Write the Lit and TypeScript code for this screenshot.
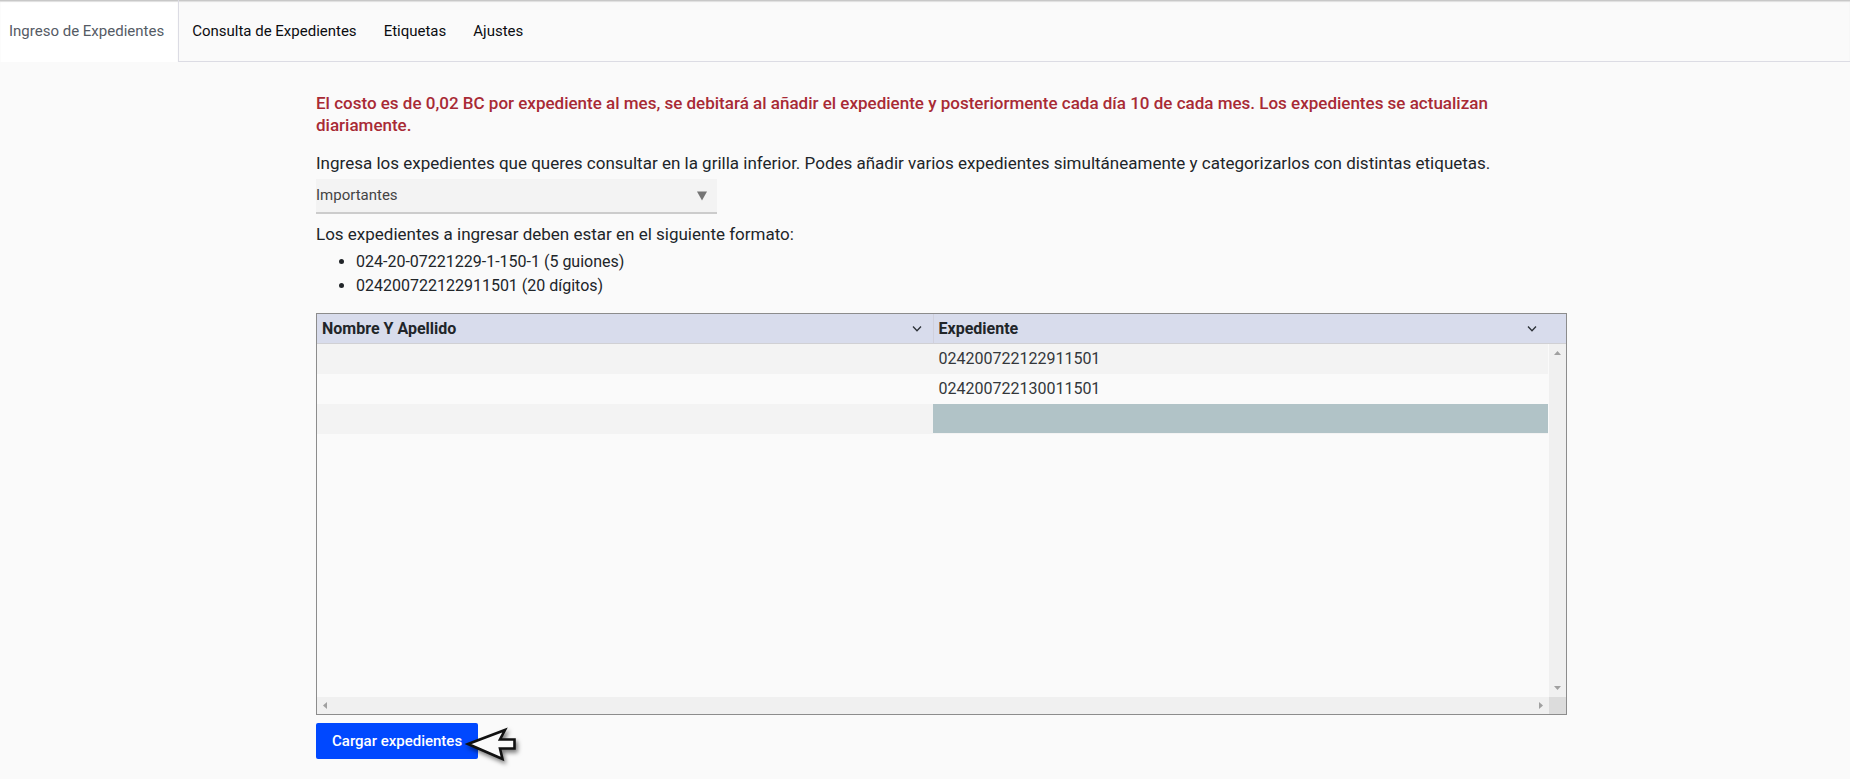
import { LitElement, html, css } from "lit";
import { customElement, state } from "lit/decorators.js";

interface Expediente {
  nombre: string;
  numero: string;
}

@customElement("app-nav")
export class AppNav extends LitElement {
  static styles = css`
    :host {
      display: block;
    }
    .bar {
      display: flex;
      height: 62px;
      box-sizing: border-box;
      font-size: 15px;
      line-height: 20px;
      box-shadow: inset 0 1px 0 #c8c8c8, inset 0 2px 1px #dedede;
    }
    .tab {
      display: flex;
      align-items: center;
      padding: 0 14px 0 13px;
      color: #0b0c10;
      text-decoration: none;
    }
    .tab.active {
      padding: 0 14px 0 9px;
      background: #fff;
      color: #555b65;
      border-right: 1px solid #dcdce4;
      box-shadow: inset 0 1px 0 #c8c8c8, inset 0 2px 1px #dedede;
    }
    .rest {
      display: flex;
      flex: 1;
      border-bottom: 1px solid #dcdce4;
    }
  `;

  render() {
    return html`
      <nav class="bar">
        <a class="tab active" href="#ingreso" aria-current="page">Ingreso de Expedientes</a>
        <div class="rest">
          <a class="tab" href="#consulta">Consulta de Expedientes</a>
          <a class="tab" href="#etiquetas">Etiquetas</a>
          <a class="tab" href="#ajustes">Ajustes</a>
        </div>
      </nav>
    `;
  }
}

@customElement("expediente-grid")
export class ExpedienteGrid extends LitElement {
  @state() rows: Expediente[] = [
    { nombre: "", numero: "024200722122911501" },
    { nombre: "", numero: "024200722130011501" },
    { nombre: "", numero: "" },
  ];
  @state() selected = 2;

  static styles = css`
    :host {
      display: block;
    }
    .frame {
      display: grid;
      grid-template-columns: 1fr 17px;
      grid-template-rows: 30px 353px 17px;
      border: 1px solid #8c8c8c;
    }
    table {
      grid-area: 1 / 1 / 3 / 3;
      align-self: start;
      width: 100%;
      table-layout: fixed;
      border-collapse: separate;
      border-spacing: 0;
      font-size: 16px;
      line-height: 20px;
      color: #212529;
    }
    th,
    td {
      box-sizing: border-box;
      height: 30px;
      padding: 0 5px;
      text-align: left;
    }
    td {
      color: #33373b;
    }
    th {
      background: #d8dcec;
      border-bottom: 1px solid #d0d0d4;
      font-weight: 700;
    }
    th:first-child {
      width: calc(50% - 10px);
    }
    th:nth-child(2) {
      border-left: 1px solid #d0d0dc;
    }
    td:nth-child(2) {
      padding-left: 6px;
    }
    .gutter {
      width: 18px;
      padding: 0;
    }
    .head {
      display: flex;
      align-items: center;
      justify-content: space-between;
    }
    .menu {
      display: flex;
      padding: 0;
      margin-right: 6px;
      border: 0;
      background: none;
    }
    tbody tr:nth-child(odd) td:not(.gutter) {
      background: #f3f3f3;
    }
    tbody tr td.selected:not(.gutter) {
      background: #b1c3c7;
      border-bottom: 1px solid #f3f3f3;
    }
    .vbar,
    .hbar {
      display: flex;
      align-items: center;
      justify-content: space-between;
      background: #f0f0f0;
    }
    .vbar {
      grid-area: 2 / 2;
      flex-direction: column;
      padding: 7px 0;
    }
    .hbar {
      grid-area: 3 / 1;
      padding: 0 6px;
    }
    .corner {
      grid-area: 3 / 2;
      background: #dcdcdc;
    }
    .arrow {
      fill: #a0a0a0;
    }
  `;

  private header(label: string) {
    return html`
      <th scope="col">
        <div class="head">
          ${label}
          <button class="menu" aria-label=${`Menú de ${label}`}>
            <svg width="10" height="8" viewBox="0 0 10 8">
              <path d="M1 1.5 5 5.7 9 1.5" fill="none" stroke="#2b3036" stroke-width="1.3" />
            </svg>
          </button>
        </div>
      </th>
    `;
  }

  private arrow(points: string, w: number, h: number) {
    return html`<svg class="arrow" width=${w} height=${h} viewBox="0 0 ${w} ${h}">
      <polygon points=${points} />
    </svg>`;
  }

  render() {
    return html`
      <div class="frame">
        <table>
          <thead>
            <tr>
              ${this.header("Nombre Y Apellido")} ${this.header("Expediente")}
              <th class="gutter"></th>
            </tr>
          </thead>
          <tbody>
            ${this.rows.map(
              (r, i) => html`
                <tr>
                  <td>${r.nombre}</td>
                  <td
                    class=${i === this.selected ? "selected" : ""}
                    @click=${() => (this.selected = i)}
                  >${r.numero}</td>
                  <td class="gutter"></td>
                </tr>
              `
            )}
          </tbody>
        </table>
        <div class="vbar">${this.arrow("0,4 3.5,0 7,4", 7, 4)} ${this.arrow("0,0 7,0 3.5,4", 7, 4)}</div>
        <div class="hbar">${this.arrow("4,0 4,7 0,3.5", 4, 7)} ${this.arrow("0,0 4,3.5 0,7", 4, 7)}</div>
        <div class="corner"></div>
      </div>
    `;
  }
}

@customElement("app-root")
export class AppRoot extends LitElement {
  static styles = css`
    :host {
      display: block;
      min-height: 100vh;
      background: #fafafa;
      color: #212529;
      font-family: Roboto, "Liberation Sans", sans-serif;
    }
    .content {
      display: flex;
      flex-direction: column;
      align-items: flex-start;
      padding: 30px 283px 16px 316px;
    }
    .cost {
      margin: 0 0 15px;
      color: #a82a35;
      font-size: 17px;
      font-weight: 500;
      line-height: 22px;
    }
    .text {
      margin: 0;
      font-size: 17px;
      line-height: 24px;
    }
    .picker {
      display: grid;
      width: 401px;
      height: 35px;
      box-sizing: border-box;
      margin: 4px 0 8px;
      background: #f3f3f3;
      border-bottom: 2px solid #cccccc;
      align-items: center;
    }
    .picker select {
      grid-area: 1 / 1;
      height: 33px;
      padding: 0 0 2px;
      border: 0;
      background: none;
      appearance: none;
      color: #444;
      font: 15px/20px Roboto, "Liberation Sans", sans-serif;
    }
    .caret {
      grid-area: 1 / 1;
      justify-self: end;
      margin-right: 10px;
      pointer-events: none;
    }
    .formats {
      margin: 4px 0 15px;
      padding-left: 40px;
      font-size: 16px;
      line-height: 24px;
    }
    expediente-grid {
      align-self: stretch;
    }
    .action {
      position: relative;
      margin-top: 8px;
    }
    .load {
      display: block;
      height: 36px;
      padding: 0 16px;
      border: 0;
      border-radius: 2px;
      background: #0048ff;
      color: #fff;
      font: 500 15px/20px Roboto, "Liberation Sans", sans-serif;
    }
    .pointer {
      position: absolute;
      right: -42px;
      top: 4px;
      filter: drop-shadow(2px 3px 2px rgba(0, 0, 0, 0.5));
      pointer-events: none;
    }
  `;

  render() {
    return html`
      <app-nav></app-nav>
      <main class="content">
        <p class="cost">
          El costo es de 0,02 BC por expediente al mes, se debitará al añadir el expediente y
          posteriormente cada día 10 de cada mes. Los expedientes se actualizan diariamente.
        </p>
        <label class="text" for="etiqueta">
          Ingresa los expedientes que queres consultar en la grilla inferior. Podes añadir varios
          expedientes simultáneamente y categorizarlos con distintas etiquetas.
        </label>
        <div class="picker">
          <select id="etiqueta">
            <option>Importantes</option>
          </select>
          <svg class="caret" width="10" height="10" viewBox="0 0 10 10">
            <polygon points="0,0.5 10,0.5 5,9.5" fill="#757575" />
          </svg>
        </div>
        <p class="text">Los expedientes a ingresar deben estar en el siguiente formato:</p>
        <ul class="formats">
          <li>024-20-07221229-1-150-1 (5 guiones)</li>
          <li>024200722122911501 (20 dígitos)</li>
        </ul>
        <expediente-grid></expediente-grid>
        <div class="action">
          <button class="load">Cargar expedientes</button>
          <svg class="pointer" width="56" height="36" viewBox="0 0 56 36">
            <path
              d="M4 17 41 3 36 12.5H50.5V21.5H36L38.5 32Z"
              fill="#fafafa"
              stroke="#111"
              stroke-width="2.6"
            />
          </svg>
        </div>
      </main>
    `;
  }
}
